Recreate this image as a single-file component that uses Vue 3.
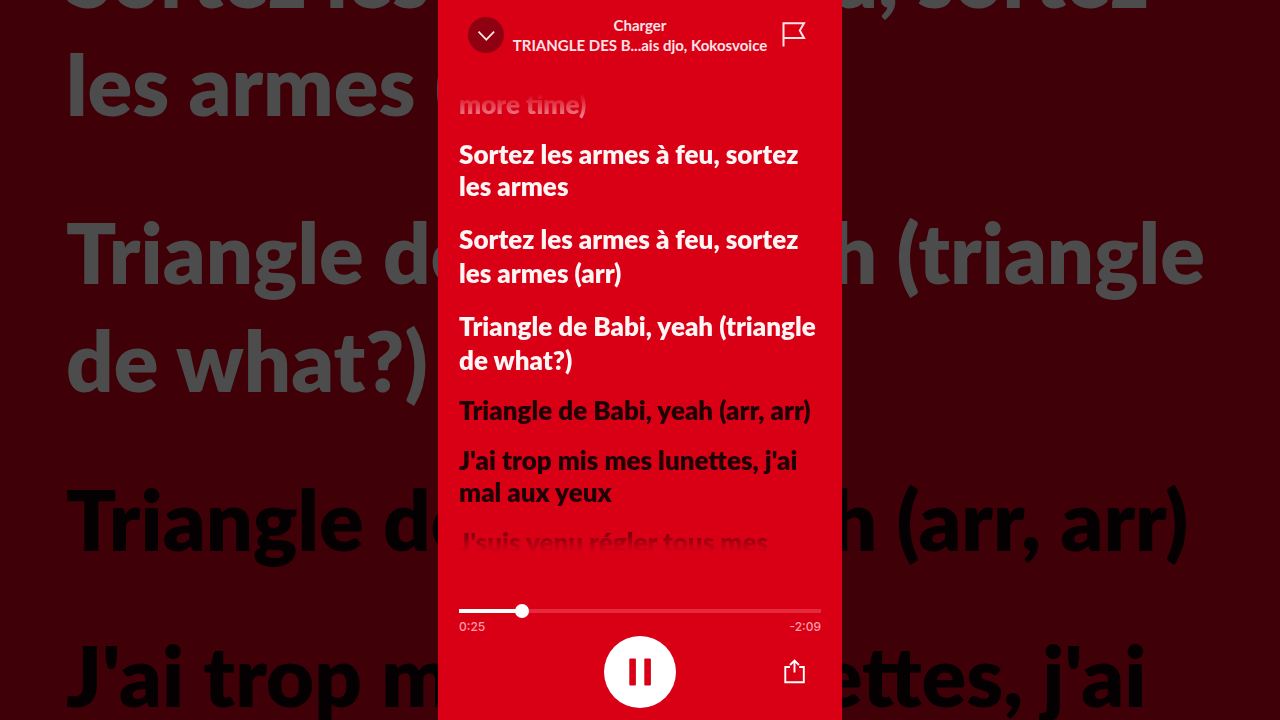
<script setup>
import { ref } from 'vue'

const verses = [
  { lines: ['more time)'], sung: true },
  { lines: ['Sortez les armes à feu, sortez', 'les armes'], sung: true },
  { lines: ['Sortez les armes à feu, sortez', 'les armes (arr)'], sung: true, tall: true },
  { lines: ['Triangle de Babi, yeah (triangle', 'de what?)'], sung: true, tall: true },
  { lines: ['Triangle de Babi, yeah (arr, arr)'] },
  { lines: ["J'ai trop mis mes lunettes, j'ai", 'mal aux yeux'] },
  { lines: ["J'suis venu régler tous mes"] }
]
const backdrop = verses.slice(2, 6)
const duration = 154
const position = ref(25)
const clock = (s) => Math.floor(s / 60) + ':' + String(s % 60).padStart(2, '0')
</script>

<template>
  <div class="stage">
    <div class="backdrop" aria-hidden="true">
      <p v-for="(v, i) in backdrop" :key="i" class="verse" :class="{ sung: v.sung, tall: v.tall }">
        <span v-for="line in v.lines" :key="line">{{ line }}</span>
      </p>
    </div>

    <main class="player">
      <header class="top">
        <button class="round" type="button" aria-label="Close lyrics">
          <svg width="36" height="36" viewBox="0 0 36 36" fill="none" stroke="currentColor" stroke-width="1.8">
            <path d="M10.5 14.7l7.8 8 7.8-8" />
          </svg>
        </button>
        <div class="titles">
          <h1>Charger</h1>
          <p>TRIANGLE DES B...ais djo, Kokosvoice</p>
        </div>
        <button class="plain" type="button" aria-label="Report lyrics">
          <svg width="36" height="36" viewBox="0 0 36 36" fill="none" stroke="currentColor" stroke-width="2">
            <path d="M7.5 29.5V6.2H28L23.8 13.6L28 21H7.5" />
          </svg>
        </button>
      </header>

      <section class="lyrics" aria-label="Lyrics">
        <p v-for="(v, i) in verses" :key="i" class="verse" :class="{ sung: v.sung, tall: v.tall }">
          <span v-for="line in v.lines" :key="line">{{ line }}</span>
        </p>
      </section>

      <footer class="controls">
        <input
          v-model.number="position"
          class="seek"
          type="range"
          min="0"
          :max="duration"
          aria-label="Playback position"
          :style="{ '--played': (position / duration) * 100 + '%' }"
        />
        <div class="times">
          <span>{{ clock(position) }}</span>
          <span>-{{ clock(duration - position) }}</span>
        </div>
        <div class="actions">
          <button class="pause" type="button" aria-label="Pause">
            <svg width="72" height="72" viewBox="0 0 72 72" fill="currentColor">
              <rect x="25.3" y="22.5" width="6.6" height="27" rx="1" />
              <rect x="40.3" y="22.5" width="6.6" height="27" rx="1" />
            </svg>
          </button>
          <button class="plain share" type="button" aria-label="Share">
            <svg width="36" height="36" viewBox="0 0 36 36" fill="none" stroke="currentColor" stroke-width="1.9">
              <path d="M14 13H9.3V28.2H27.8V13H23.2" />
              <path d="M18.5 18.5V6.5M14 11L18.5 6.5L23 11" />
            </svg>
          </button>
        </div>
      </footer>
    </main>
  </div>
</template>

<style>
body {
  margin: 0;
  background: #400008;
}
</style>

<style scoped>
.stage {
  position: relative;
  display: flex;
  justify-content: center;
  height: 100vh;
  min-height: 480px;
  overflow: hidden;
  background: #400008;
  font-family: Lato, "Liberation Sans", sans-serif;
}
h1,
p {
  margin: 0;
}
.verse span {
  display: block;
  white-space: nowrap;
}
.backdrop {
  position: absolute;
  top: -84px;
  left: 66px;
  display: flex;
  flex-direction: column;
  gap: 54px;
  color: #050001;
  font-size: 83px;
  font-weight: 800;
  line-height: 102px;
}
.backdrop .tall {
  padding-top: 6px;
  line-height: 108px;
}
.backdrop .sung {
  color: #4c4c4c;
}
.player {
  position: relative;
  display: flex;
  flex-direction: column;
  width: 404px;
  max-width: 100%;
  background: #d90016;
  color: #fff;
}
.top {
  display: grid;
  grid-template-columns: 36px 1fr 36px;
  align-items: center;
  padding: 15px 30px 33px;
}
button {
  display: block;
  padding: 0;
  border: 0;
  background: none;
  color: #fff;
}
button svg {
  display: block;
}
.round {
  border-radius: 50%;
  background: #8f0010;
  color: #ffe3e5;
}
.plain {
  color: #ffe3e5;
}
.titles {
  color: #ffe3e5;
  line-height: 20px;
  white-space: nowrap;
}
.titles h1,
.titles p {
  display: flex;
  justify-content: center;
  font-size: 15px;
  font-weight: 700;
}
.lyrics {
  display: flex;
  flex: 1;
  flex-direction: column;
  gap: 18px;
  min-height: 0;
  padding: 0 21px;
  overflow: hidden;
  color: #1c0003;
  font-size: 26px;
  font-weight: 800;
  line-height: 32px;
  mask-image: linear-gradient(transparent 6px, #000 48px, #000 calc(100% - 40px), transparent calc(100% - 2px));
}
.lyrics .tall {
  margin-bottom: -1px;
  padding-top: 2px;
  line-height: 34px;
}
.lyrics .sung {
  color: #fff5f5;
}
.controls {
  padding: 50px 21px 12px;
}
.seek {
  display: block;
  width: 100%;
  height: 14px;
  margin: 0;
  appearance: none;
  border-radius: 2px;
  background: linear-gradient(#fff, #fff) left center / var(--played) 4px no-repeat,
    linear-gradient(#e62a3d, #e62a3d) center / 100% 4px no-repeat;
}
.seek::-webkit-slider-thumb {
  width: 14px;
  height: 14px;
  appearance: none;
  border-radius: 50%;
  background: #fff;
}
.times {
  display: flex;
  justify-content: space-between;
  color: #ff9ea6;
  font-family: Inter, "Liberation Sans", sans-serif;
  font-size: 12px;
  font-weight: 500;
  line-height: 18px;
}
.actions {
  display: grid;
  grid-template-columns: 36px 1fr 36px;
  align-items: center;
  justify-items: center;
  padding: 0 9px;
}
.pause {
  grid-column: 2;
  border-radius: 50%;
  background: #fff;
  color: #d90016;
}
.share {
  color: #fff;
}
</style>
